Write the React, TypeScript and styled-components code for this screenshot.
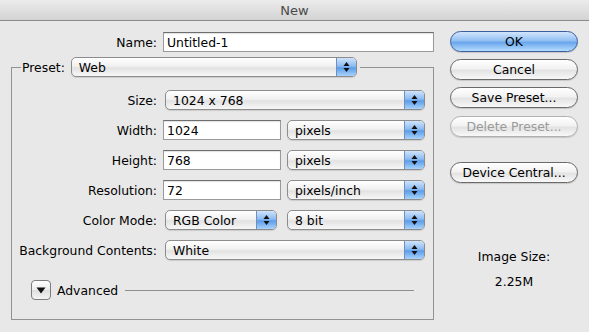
import React from 'react'
import styled, { createGlobalStyle } from 'styled-components'

const GlobalStyle = createGlobalStyle`
  html, body {
    margin: 0;
    padding: 0;
    background: #e8e8e8;
  }
  body {
    font-family: "DejaVu Sans", "Liberation Sans", sans-serif;
    font-size: 12.4px;
    color: #000;
  }
`

const Window = styled.div`
  width: 589px;
  height: 332px;
  background: #e8e8e8;
  overflow: hidden;
`

const TitleBar = styled.div`
  height: 20px;
  border-bottom: 1px solid #8a8a8a;
  background: linear-gradient(#ececec, #d3d3d3);
  display: flex;
  align-items: center;
  justify-content: center;
  font-size: 13px;
  color: #4a4a4a;
`

const Body = styled.div`
  display: flex;
  padding: 11px 11px 0 11px;
  gap: 16px;
`

const LeftColumn = styled.div`
  width: 423px;
  flex-shrink: 0;
  display: flex;
  flex-direction: column;
  gap: 5px;
`

const RightColumn = styled.div`
  width: 128px;
  flex-shrink: 0;
  display: flex;
  flex-direction: column;
  margin-top: -1px;
`

const Row = styled.div`
  display: flex;
  align-items: center;
  height: 20px;
`

const Label = styled.div<{ $w: number }>`
  width: ${p => p.$w}px;
  flex-shrink: 0;
  text-align: right;
  white-space: nowrap;
  margin-right: 6px;
`

const TextInput = styled.div<{ $w: number }>`
  width: ${p => p.$w}px;
  flex-shrink: 0;
  height: 20px;
  box-sizing: border-box;
  background: #fff;
  border: 1px solid #9a9a9a;
  border-top-color: #6e6e6e;
  box-shadow: inset 0 1px 1px rgba(0, 0, 0, 0.12);
  padding-left: 3px;
  display: flex;
  align-items: center;
`

const PopupBox = styled.div<{ $w: number; $gap: number }>`
  width: ${p => p.$w}px;
  flex-shrink: 0;
  height: 20px;
  box-sizing: border-box;
  margin-left: ${p => p.$gap}px;
  display: flex;
  border: 1px solid #8c8c8c;
  border-radius: 5px;
  background: linear-gradient(#ffffff, #f1f1f1 45%, #e2e2e2 55%, #f7f7f7);
  box-shadow: 0 1px 1px rgba(0, 0, 0, 0.12);
  overflow: hidden;
`

const PopupText = styled.div`
  flex: 1;
  padding-left: 7px;
  display: flex;
  align-items: center;
  white-space: nowrap;
`

const PopupArrows = styled.div`
  width: 19px;
  border-left: 1px solid #6f8fbf;
  background: linear-gradient(#cfe3fb, #8dbbf2 45%, #5d9de9 55%, #a8d3fb);
  display: flex;
  align-items: center;
  justify-content: center;
`

const Group = styled.div`
  margin-top: 10px;
  height: 252px;
  border: 1px solid #929292;
  border-top: none;
  display: flex;
  flex-direction: column;
`

const GroupHeader = styled.div`
  display: flex;
  align-items: center;
  height: 20px;
  margin: -10px -1px 0 -1px;
`

const HeaderLine = styled.div<{ $w?: number; $gap?: number }>`
  ${p => (p.$w ? `width: ${p.$w}px;` : 'flex: 1;')}
  margin-left: ${p => p.$gap ?? 0}px;
  border-top: 1px solid #929292;
  margin-top: 1px;
`

const HeaderLabel = styled.div`
  padding: 0 4px 0 1px;
`

const GroupRows = styled.div`
  display: flex;
  flex-direction: column;
  gap: 10px;
  margin-top: 13px;
`

const AdvancedRow = styled.div`
  display: flex;
  align-items: center;
  height: 20px;
  margin: 20px 19px 0 19px;
`

const Disclosure = styled.div`
  width: 20px;
  height: 20px;
  box-sizing: border-box;
  border: 1px solid #7c7c7c;
  border-radius: 4px;
  background: linear-gradient(#ffffff, #ececec 50%, #dedede 51%, #f4f4f4);
  display: flex;
  align-items: center;
  justify-content: center;
  margin-right: 6px;
`

const AdvancedLine = styled.div`
  flex: 1;
  border-top: 1px solid #8f8f8f;
  margin-left: 7px;
`

const Button = styled.div<{ $default?: boolean; $disabled?: boolean; $gap?: number }>`
  height: 21px;
  box-sizing: border-box;
  margin-top: ${p => p.$gap ?? 0}px;
  border-radius: 11px;
  border: 1px solid ${p => (p.$default ? '#3a5f9c' : p.$disabled ? '#b0b0b0' : '#6a6a6a')};
  background: ${p =>
    p.$default
      ? 'linear-gradient(#d2e6fc, #93c0f3 45%, #6aa6ec 55%, #b4dcfd)'
      : 'linear-gradient(#ffffff, #f2f2f2 45%, #e3e3e3 55%, #f8f8f8)'};
  color: ${p => (p.$disabled ? '#9a9a9a' : '#000')};
  display: flex;
  align-items: center;
  justify-content: center;
  box-shadow: 0 1px 1px rgba(0, 0, 0, 0.15);
`

const SizeInfo = styled.div`
  margin-top: 61px;
  text-align: center;
  line-height: 25px;
`

const Arrows = () => (
  <svg width="7" height="12" viewBox="0 0 7 12">
    <path d="M3.5 1 L6.5 5 L0.5 5 Z" fill="#111" />
    <path d="M3.5 11 L6.5 7 L0.5 7 Z" fill="#111" />
  </svg>
)

const Popup = ({ width, value, gap = 2 }: { width: number; value: string; gap?: number }) => (
  <PopupBox $w={width} $gap={gap}>
    <PopupText>{value}</PopupText>
    <PopupArrows>
      <Arrows />
    </PopupArrows>
  </PopupBox>
)

const rows = [
  { label: 'Width:', value: '1024', unit: 'pixels' },
  { label: 'Height:', value: '768', unit: 'pixels' },
  { label: 'Resolution:', value: '72', unit: 'pixels/inch' },
]

const App: React.FC = () => {
  return (
    <Window>
      <GlobalStyle />
      <TitleBar>New</TitleBar>
      <Body>
        <LeftColumn>
          <Row>
            <Label $w={146}>Name:</Label>
            <TextInput $w={271}>Untitled-1</TextInput>
          </Row>
          <Group>
            <GroupHeader>
              <HeaderLine $w={10} />
              <HeaderLabel>Preset:</HeaderLabel>
              <Popup width={286} value="Web" />
              <HeaderLine $gap={3} />
            </GroupHeader>
            <GroupRows>
              <Row>
                <Label $w={145}>Size:</Label>
                <Popup width={260} value="1024 x 768" />
              </Row>
              {rows.map(r => (
                <Row key={r.label}>
                  <Label $w={145}>{r.label}</Label>
                  <TextInput $w={118}>{r.value}</TextInput>
                  <Popup width={138} value={r.unit} gap={6} />
                </Row>
              ))}
              <Row>
                <Label $w={145}>Color Mode:</Label>
                <Popup width={112} value="RGB Color" />
                <Popup width={138} value="8 bit" gap={10} />
              </Row>
              <Row>
                <Label $w={145}>Background Contents:</Label>
                <Popup width={260} value="White" />
              </Row>
            </GroupRows>
            <AdvancedRow>
              <Disclosure>
                <svg width="10" height="7" viewBox="0 0 10 7">
                  <path d="M0.5 0.5 L9.5 0.5 L5 6.5 Z" fill="#111" />
                </svg>
              </Disclosure>
              Advanced
              <AdvancedLine />
            </AdvancedRow>
          </Group>
        </LeftColumn>
        <RightColumn>
          <Button $default>OK</Button>
          <Button $gap={7}>Cancel</Button>
          <Button $gap={7}>Save Preset...</Button>
          <Button $gap={8} $disabled>Delete Preset...</Button>
          <Button $gap={25}>Device Central...</Button>
          <SizeInfo>
            Image Size:
            <br />
            2.25M
          </SizeInfo>
        </RightColumn>
      </Body>
    </Window>
  )
}

export default App
